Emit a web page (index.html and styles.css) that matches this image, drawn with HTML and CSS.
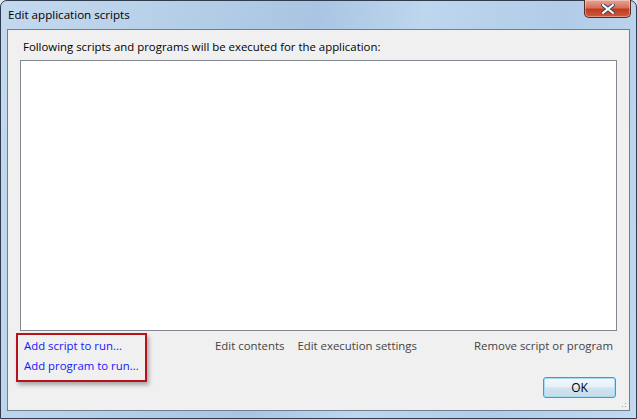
FILE: index.html
```html
<!DOCTYPE html>
<html lang="en">
<head>
    <meta charset="UTF-8">
    <title>Edit application scripts</title>
    <link rel="stylesheet" href="styles.css">
</head>
<body>
    <div class="window">
        <div class="titlebar">
            <span class="title">Edit application scripts</span>
            <button class="close" aria-label="Close">
                <svg width="14" height="10" viewBox="0 0 14 10">
                    <path d="M2 1 L12 9 M12 1 L2 9" stroke="#3b4a5a" stroke-width="4" stroke-linecap="square"/>
                    <path d="M2 1 L12 9 M12 1 L2 9" stroke="#fff" stroke-width="2" stroke-linecap="square"/>
                </svg>
            </button>
        </div>
        <div class="client">
            <p class="caption">Following scripts and programs will be executed for the application:</p>
            <div class="listbox"></div>
            <div class="actions">
                <div class="add-links">
                    <a href="#" class="link">Add script to run...</a>
                    <a href="#" class="link">Add program to run...</a>
                </div>
                <span class="cmd edit">Edit contents</span>
                <span class="cmd">Edit execution settings</span>
                <span class="cmd remove">Remove script or program</span>
            </div>
            <div class="footer">
                <button class="ok">OK</button>
            </div>
            <div class="grip"></div>
        </div>
    </div>
</body>
</html>
```

FILE: styles.css
```css
* {
    margin: 0;
    padding: 0;
    box-sizing: border-box;
}
body {
    width: 637px;
    height: 419px;
    background: #dfe6ee;
    font-family: "Open Sans", "Noto Sans", sans-serif;
    font-size: 11.4px;
    overflow: hidden;
}
.window {
    width: 637px;
    height: 419px;
    border: 1px solid #2e3c4d;
    border-radius: 7px 7px 0 0;
    background: linear-gradient(100deg, #c4d9ee 0%, #b6cfe8 25%, #a9c5e3 45%, #bed6ee 60%, #b2cce8 80%, #c3d9ef 100%);
    display: flex;
    flex-direction: column;
}
.titlebar {
    height: 28px;
    display: flex;
    align-items: flex-start;
    justify-content: space-between;
    padding-left: 7px;
}
.title {
    color: #000;
    font-size: 11.6px;
    line-height: 14px;
    margin-top: 7px;
}
.close {
    width: 47px;
    height: 18px;
    margin-right: 5px;
    margin-top: -1px;
    border: 1px solid #5a2a2a;
    border-top: none;
    border-radius: 0 0 5px 5px;
    background: linear-gradient(#e8a393 0%, #d8705a 45%, #c2391f 55%, #cf5b3e 100%);
    box-shadow: inset 0 0 0 1px rgba(255, 255, 255, 0.35);
    display: flex;
    align-items: center;
    justify-content: center;
}
.client {
    flex: 1;
    margin: 0 6px 7px 6px;
    border: 1px solid #6f7f92;
    background: #f0f0f0;
    display: flex;
    flex-direction: column;
    position: relative;
}
.caption {
    color: #000;
    padding: 9px 0 0 15px;
    line-height: 16px;
}
.listbox {
    height: 271px;
    margin: 5px 12px 0 12px;
    background: #fff;
    border: 1px solid #828790;
}
.actions {
    display: flex;
    align-items: flex-start;
    padding: 2px 16px 0 8px;
}
.add-links {
    display: flex;
    flex-direction: column;
    gap: 4px;
    width: 131px;
    padding: 3px 0 6px 6px;
    border: 2px solid #b5121b;
    box-shadow: 2px 3px 4px rgba(0, 0, 0, 0.3);
}
.link {
    color: #1515ff;
    text-decoration: none;
    line-height: 16px;
}
.cmd {
    color: #444;
    line-height: 16px;
    margin-top: 5px;
}
.edit {
    margin-left: 68px;
    margin-right: 13px;
}
.remove {
    margin-left: auto;
}
.footer {
    display: flex;
    justify-content: flex-end;
    padding: 0 13px 0 0;
    margin-top: -5px;
}
.ok {
    width: 73px;
    height: 21px;
    border: 1px solid #3c9bd6;
    border-radius: 3px;
    background: linear-gradient(#f4f9fc 0%, #e6f0f7 48%, #cfe2ef 52%, #c8dcea 100%);
    box-shadow: inset 0 0 0 1px #a8dcf5;
    font-family: inherit;
    font-size: 12px;
    color: #000;
}
.grip {
    position: absolute;
    right: 1px;
    bottom: 1px;
    width: 10px;
    height: 10px;
    background: radial-gradient(circle, #a6a6a6 0.7px, transparent 1px) 0 0 / 3px 3px;
    clip-path: polygon(100% 0, 100% 100%, 0 100%);
}
```
